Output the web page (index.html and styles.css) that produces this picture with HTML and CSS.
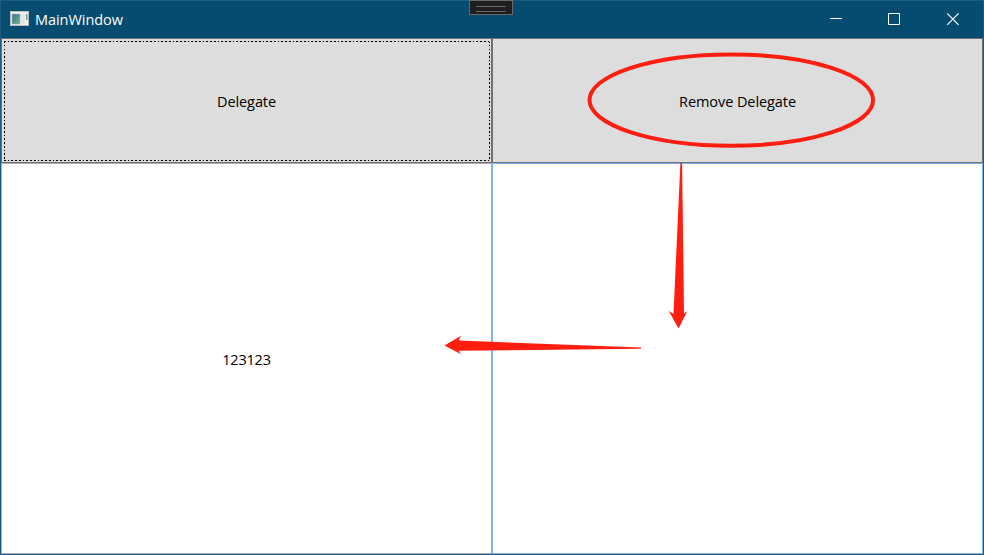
FILE: index.html
```html
<!DOCTYPE html>
<html lang="en">
<head>
<meta charset="utf-8">
<title>MainWindow</title>
<link rel="stylesheet" href="styles.css">
</head>
<body>
<div class="window">
  <header class="titlebar">
    <svg class="app-icon" width="19" height="15" viewBox="0 0 19 15">
      <defs><linearGradient id="pane" x1="0" y1="0" x2="1" y2="1"><stop offset="0" stop-color="#3d719b"/><stop offset="1" stop-color="#6bb383"/></linearGradient></defs>
      <rect x="0.5" y="0.5" width="18" height="14" fill="#f1f1f1" stroke="#b9bcbf"/>
      <rect x="2" y="3" width="8" height="10" fill="url(#pane)" stroke="#a6b3ba" stroke-width=".6"/>
      <rect x="11" y="3" width="4" height="10" fill="#e4e6e6"/>
      <rect x="16" y="3" width="1.5" height="6" fill="#6c9d91"/>
    </svg>
    <h1 class="title">MainWindow</h1>
    <div class="controls">
      <svg width="59" height="37" viewBox="0 0 59 37"><path d="M19 17.5h12"/></svg>
      <svg width="59" height="37" viewBox="0 0 59 37"><path d="M18.5 12.5h11v11h-11z"/></svg>
      <svg width="54" height="37" viewBox="0 0 54 37"><path d="M18.2 12.4l11.4 11.4M29.6 12.4L18.2 23.8" stroke-width="1.2"/></svg>
    </div>
  </header>
  <main class="grid">
    <button class="btn focused"><span class="label">Delegate</span></button>
    <button class="btn"><span class="label">Remove Delegate</span></button>
    <div class="box left"><span class="label value">123123</span></div>
    <div class="box right"></div>
  </main>
  <div class="grip"></div>
  <svg class="annotations" width="984" height="555" viewBox="0 0 984 555">
    <ellipse cx="731.3" cy="100.1" rx="141.8" ry="45.7"/>
    <path d="M680.4 163h1.7L684 313.5l3.4-2.5L678.5 328.5 668.8 311l4.7 2.7z"/>
    <path d="M641 347.5v1.3L458.5 350.7l2.6 3.5L444.5 345.5 461 335.8l-2.3 4.8z"/>
  </svg>
</div>
</body>
</html>
```
FILE: styles.css
```css
* { box-sizing: border-box; }
body { margin: 0; overflow: hidden; }
.window {
  position: relative;
  display: flex;
  flex-direction: column;
  width: 984px;
  height: 555px;
  border: 1px solid #1f5b80;
  background: #064b70;
  font-family: "Open Sans", "Noto Sans", sans-serif;
  font-size: 14.5px;
}
.titlebar { display: flex; align-items: center; flex: 0 0 37px; padding-left: 9px; color: #fff; }
.title { margin: 0 0 0 6px; font-size: 14.5px; font-weight: 400; line-height: 20px; letter-spacing: -.05px; }
.app-icon { margin-top: -2px; }
.controls { display: flex; margin-left: auto; }
.controls svg { display: block; fill: none; stroke: #fff; stroke-width: 1; }
.grid {
  flex: 1;
  display: grid;
  grid-template: 125px 1fr / 491px 491px;
}
.btn {
  position: relative;
  display: flex;
  align-items: center;
  justify-content: center;
  margin: 0;
  padding: 2px 0 0;
  border: 1px solid #707070;
  border-radius: 0;
  background: #ddd;
  color: #000;
  font: inherit;
}
.focused::after {
  content: "";
  position: absolute;
  inset: 2px 1px 1px 2px;
  background:
    repeating-linear-gradient(90deg, #000 0 1.6px, #ccc 1.6px 3.75px) top / 100% 1px no-repeat,
    repeating-linear-gradient(90deg, #000 0 1.6px, #ccc 1.6px 3.75px) bottom / 100% 1px no-repeat,
    repeating-linear-gradient(#000 0 1.6px, #ccc 1.6px 3.75px) left / 1px 100% no-repeat,
    repeating-linear-gradient(#000 0 1.6px, #ccc 1.6px 3.75px) right / 1px 100% no-repeat;
}
.box { display: flex; align-items: center; justify-content: center; padding-top: 2px; background: #fff; border: 1px solid #abadb3; }
.right { border-color: #7eb4ea; }
.left { border-right-color: #7eb4ea; }
.label { line-height: 20px; white-space: nowrap; letter-spacing: -.08px; }
.value { letter-spacing: -.2px; }
.grip {
  position: absolute;
  top: -1px;
  left: 468px;
  width: 44px;
  height: 15px;
  border: 1px solid #696969;
  background: #1f1f1f;
}
.grip::after {
  content: "";
  position: absolute;
  left: 6px;
  top: 5px;
  width: 30px;
  height: 4px;
  border: solid #696969;
  border-width: 1px 0;
}
.annotations { position: absolute; top: -1px; left: -1px; fill: #ff1e10; pointer-events: none; }
.annotations ellipse { fill: none; stroke: #ff1e10; stroke-width: 4; }
```
